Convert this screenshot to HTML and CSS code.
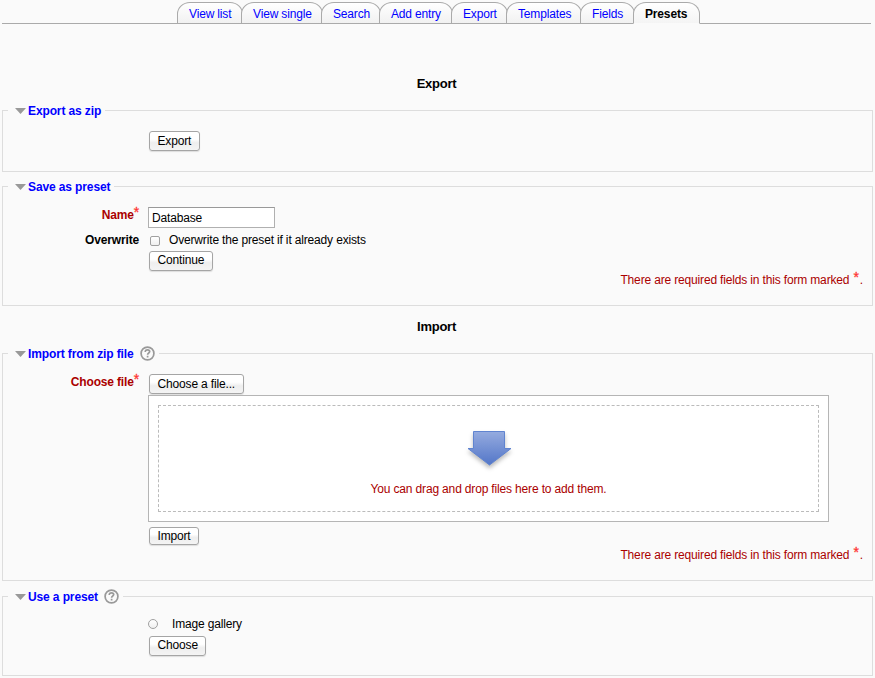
FILE: index.html
```html
<!DOCTYPE html>
<html lang="en">
<head>
<meta charset="utf-8">
<title>Database presets</title>
<link rel="stylesheet" href="styles.css">
</head>
<body>
<nav class="tabs">
  <a class="tab list">View list</a>
  <a class="tab single">View single</a>
  <a class="tab search">Search</a>
  <a class="tab add">Add entry</a>
  <a class="tab export">Export</a>
  <a class="tab templates">Templates</a>
  <a class="tab fields">Fields</a>
  <a class="tab active">Presets</a>
</nav>
<main>
  <h2 class="heading first">Export</h2>
  <fieldset class="box export-box">
    <legend><i class="caret"></i><span>Export as zip</span></legend>
    <div class="indent"><button class="btn">Export</button></div>
  </fieldset>
  <fieldset class="box save-box">
    <legend><i class="caret"></i><span>Save as preset</span></legend>
    <div class="row name-row">
      <label class="label required">Name<sup class="star">*</sup></label>
      <input class="text" type="text" value="Database">
    </div>
    <div class="row over-row">
      <span class="label">Overwrite</span>
      <label class="option"><input class="check" type="checkbox"><span>Overwrite the preset if it already exists</span></label>
    </div>
    <div class="indent"><button class="btn raised">Continue</button></div>
    <p class="note">There are required fields in this form marked <sup class="star">*</sup>.</p>
  </fieldset>
  <h2 class="heading second">Import</h2>
  <fieldset class="box import-box">
    <legend><i class="caret"></i><span>Import from zip file</span>
      <svg class="help" viewBox="0 0 15 15"><circle cx="7.5" cy="7.5" r="6.4"/><path d="M5.3 6V5.6C5.3 4.4 6.3 3.8 7.5 3.8S9.7 4.5 9.7 5.6C9.7 7 7.6 7 7.6 8.7M7.6 9.8V11.6"/></svg>
    </legend>
    <div class="row file-row">
      <span class="label required">Choose file<sup class="star">*</sup></span>
      <div class="picker">
        <button class="btn">Choose a file...</button>
        <div class="drop"><div class="drop-inner">
          <svg class="arrow" viewBox="0 0 48 42">
            <defs><linearGradient id="blue" x1="0" y1="0" x2="0" y2="1"><stop offset="0" stop-color="#95abdf"/><stop offset="1" stop-color="#5376c8"/></linearGradient></defs>
            <path d="M8.500 2.500H39.500V19.500H46L24.500 36L3 19.500H8.500Z" fill="url(#blue)" stroke="#6084d0"/>
          </svg>
          <span>You can drag and drop files here to add them.</span>
        </div></div>
      </div>
    </div>
    <div class="indent"><button class="btn short">Import</button></div>
    <p class="note">There are required fields in this form marked <sup class="star">*</sup>.</p>
  </fieldset>
  <fieldset class="box use-box">
    <legend><i class="caret"></i><span>Use a preset</span>
      <svg class="help" viewBox="0 0 15 15"><circle cx="7.5" cy="7.5" r="6.4"/><path d="M5.3 6V5.6C5.3 4.4 6.3 3.8 7.5 3.8S9.7 4.5 9.7 5.6C9.7 7 7.6 7 7.6 8.7M7.6 9.8V11.6"/></svg>
    </legend>
    <label class="option radio-option"><input class="radio" type="radio"><span>Image gallery</span></label>
    <div class="indent"><button class="btn raised">Choose</button></div>
  </fieldset>
</main>
</body>
</html>
```
FILE: styles.css
```css
* { box-sizing: border-box; }
body {
  margin: 0;
  height: 678px;
  overflow: hidden;
  background: #fafafa;
  color: #000;
  font: 12px/14px "Liberation Sans", Arial, sans-serif;
  letter-spacing: -0.16px;
}
.tabs {
  display: flex;
  height: 24px;
  margin: 0 4px 0 2px;
  padding: 2px 0 0 175px;
  box-shadow: inset 0 -1px #aaa;
}
.tab {
  flex: none;
  height: 22px;
  margin-right: -2px;
  padding: 4px 0 0 11px;
  border: 1px solid #aaa;
  border-radius: 13px 13px 0 0 / 12px 12px 0 0;
  background: linear-gradient(#fff, #f1f1f1);
  color: #00f;
  white-space: nowrap;
}
.list { width: 66px; }
.single { width: 82px; }
.search { width: 60px; }
.add { width: 74px; }
.export { width: 57px; }
.templates { width: 76px; }
.fields { width: 55px; }
.active {
  width: 67px;
  border-bottom-color: #fafafa;
  background: linear-gradient(#fff, #f4f4f4);
  color: #000;
  font-weight: bold;
}
main { padding: 0 2px; }
.heading {
  margin: 0;
  padding-right: 2px;
  font-size: 13px;
  letter-spacing: -0.25px;
  line-height: 16px;
  text-align: center;
}
.first { padding-top: 52px; height: 78px; }
.second { padding-top: 13px; height: 39px; }
.box {
  min-width: 0;
  margin: 0;
  padding: 0;
  border: 1px solid #ddd;
}
.export-box { height: 70px; margin-bottom: 6px; }
.save-box { height: 128px; }
.import-box { height: 236px; margin-bottom: 7px; }
.use-box { height: 88px; }
legend {
  display: flex;
  align-items: center;
  height: 17px;
  margin-left: 5px;
  padding: 1px 4px 0 7px;
  color: #00f;
  font-weight: bold;
  letter-spacing: -0.12px;
}
.caret {
  width: 11px;
  height: 6px;
  margin-right: 2px;
  background: #999;
  clip-path: polygon(0 0, 100% 0, 50% 100%);
}
.help {
  width: 15px;
  height: 15px;
  margin: -2px 0 0 6px;
  fill: none;
  stroke: #999;
  stroke-width: 1.7;
}
.indent { padding-left: 146px; }
.btn {
  display: block;
  height: 20px;
  padding: 0 7.5px 1px;
  border: 1px solid #a5a5a5;
  border-radius: 3px;
  background: linear-gradient(#fff 40%, #eee 60%, #f4f4f4);
  box-shadow: 0 1px 1px #ddd;
  color: #000;
  font: inherit;
  letter-spacing: inherit;
}
.raised { padding-bottom: 3px; }
.short { height: 18px; }
.export-box .indent { padding-top: 12px; }
.row { display: flex; }
.label {
  width: 136px;
  flex: none;
  text-align: right;
  font-weight: bold;
}
.required { color: #a00; }
.star {
  margin: 0 1px;
  color: #f33;
  font-size: 14px;
  font-weight: normal;
  line-height: 0;
  vertical-align: 2px;
  -webkit-text-stroke: 0.3px #f33;
}
.name-row { height: 38px; padding-top: 12px; }
.name-row .label { padding-top: 1px; }
.text {
  width: 127px;
  height: 21px;
  margin-left: 9px;
  padding: 0 3px;
  border: 1px solid #b0b0b0;
  border-top-color: #999;
  background: #fff;
  font: inherit;
  letter-spacing: inherit;
}
.over-row { height: 18px; }
.option { display: flex; }
.check, .radio {
  appearance: none;
  width: 10px;
  height: 10px;
  margin: 3px 9px 0 11px;
  border: 1px solid #a0a0a0;
  border-radius: 2px;
  background: linear-gradient(#fff, #f0f0f0);
}
.note {
  margin: 0;
  padding: 3px 9px 0 0;
  color: #a00;
  text-align: right;
}
.label .star { margin: 0; }
.save-box .note { padding-top: 2px; }
.file-row { padding-top: 12px; }
.file-row .label { padding-top: 1px; }
.picker { margin-left: 9px; }
.picker .btn { margin-left: 1px; }
.drop {
  width: 681px;
  height: 127px;
  margin-top: 1px;
  padding: 9px;
  border: 1px solid #b5b5b5;
  background: #fff;
}
.drop-inner {
  display: flex;
  flex-direction: column;
  align-items: center;
  height: 107px;
  padding-top: 23px;
  border: 1px dashed #bbb;
  color: #a00;
}
.arrow {
  width: 48px;
  height: 42px;
  margin-bottom: 11px;
  filter: drop-shadow(0 3px 2px #bbb);
}
.import-box .indent { padding-top: 5px; }
.radio-option { padding: 12px 0 5px; }
.radio { margin: 2px 14px 0 145px; border-radius: 50%; }
```
